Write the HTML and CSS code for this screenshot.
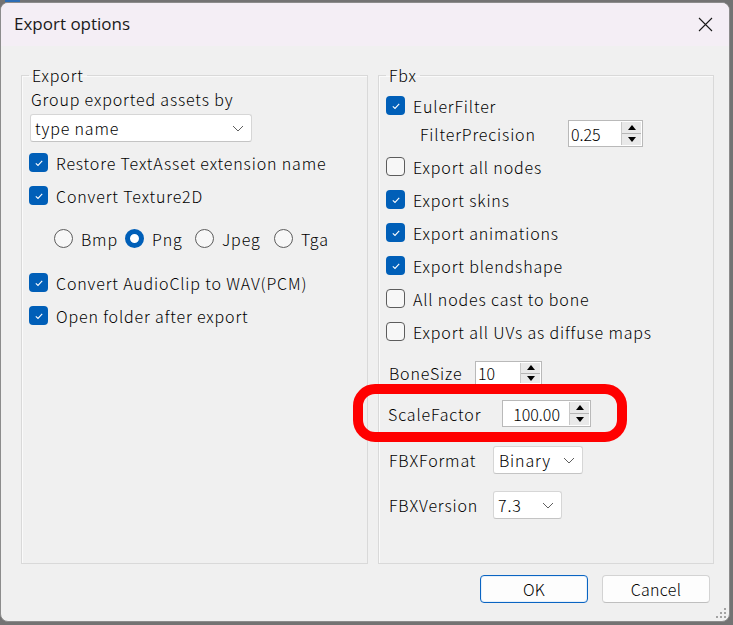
FILE: index.html
```html
<!DOCTYPE html>
<html>

<head>
    <title>Export options</title>
    <link rel="stylesheet" href="styles.css">
</head>

<body>
    <div class="desktop-strip"><span class="desktop-tile"></span></div>

    <div class="window">
        <div class="titlebar">
            <span class="title">Export options</span>
            <svg class="close" width="15" height="15" viewBox="0 0 15 15">
                <path d="M1 1 L14 14 M14 1 L1 14" stroke="#1a1a1a" stroke-width="1.1" fill="none" />
            </svg>
        </div>

        <div class="client">
            <div class="groups">
                <fieldset class="group group-export">
                    <legend>Export</legend>
                    <div class="caption">Group exported assets by</div>
                    <div class="combo combo-group">
                        <span>type name</span>
                        <svg class="chevron" width="12" height="7" viewBox="0 0 12 7"><path d="M1 1 L6 6 L11 1" /></svg>
                    </div>

                    <div class="check first-check"><span class="box on"><svg viewBox="0 0 12 12"><path d="M2.8 6.3 L5 8.4 L9.2 3.8" /></svg></span>Restore TextAsset extension name</div>
                    <div class="check"><span class="box on"><svg viewBox="0 0 12 12"><path d="M2.8 6.3 L5 8.4 L9.2 3.8" /></svg></span>Convert Texture2D</div>

                    <div class="radios">
                        <div class="radio"><span class="dot"></span>Bmp</div>
                        <div class="radio"><span class="dot on"></span>Png</div>
                        <div class="radio"><span class="dot"></span>Jpeg</div>
                        <div class="radio"><span class="dot"></span>Tga</div>
                    </div>

                    <div class="check"><span class="box on"><svg viewBox="0 0 12 12"><path d="M2.8 6.3 L5 8.4 L9.2 3.8" /></svg></span>Convert AudioClip to WAV(PCM)</div>
                    <div class="check"><span class="box on"><svg viewBox="0 0 12 12"><path d="M2.8 6.3 L5 8.4 L9.2 3.8" /></svg></span>Open folder after export</div>
                </fieldset>

                <fieldset class="group group-fbx">
                    <legend>Fbx</legend>
                    <div class="check first-check"><span class="box on"><svg viewBox="0 0 12 12"><path d="M2.8 6.3 L5 8.4 L9.2 3.8" /></svg></span>EulerFilter</div>

                    <div class="field precision-row">
                        <span class="field-label precision-label">FilterPrecision</span>
                        <div class="spin spin-precision">
                            <span class="spin-value">0.25</span>
                            <span class="spin-buttons"><span class="up"></span><span class="down"></span></span>
                        </div>
                    </div>

                    <div class="check after-spin"><span class="box"></span>Export all nodes</div>
                    <div class="check"><span class="box on"><svg viewBox="0 0 12 12"><path d="M2.8 6.3 L5 8.4 L9.2 3.8" /></svg></span>Export skins</div>
                    <div class="check"><span class="box on"><svg viewBox="0 0 12 12"><path d="M2.8 6.3 L5 8.4 L9.2 3.8" /></svg></span>Export animations</div>
                    <div class="check"><span class="box on"><svg viewBox="0 0 12 12"><path d="M2.8 6.3 L5 8.4 L9.2 3.8" /></svg></span>Export blendshape</div>
                    <div class="check"><span class="box"></span>All nodes cast to bone</div>
                    <div class="check"><span class="box"></span>Export all UVs as diffuse maps</div>

                    <div class="field bone-row">
                        <span class="field-label bone-label">BoneSize</span>
                        <div class="spin spin-bone">
                            <span class="spin-value">10</span>
                            <span class="spin-buttons"><span class="up"></span><span class="down"></span></span>
                        </div>
                    </div>

                    <div class="field scale-row">
                        <span class="field-label scale-label">ScaleFactor</span>
                        <div class="spin spin-scale">
                            <span class="spin-value right">100.00</span>
                            <span class="spin-buttons"><span class="up"></span><span class="down"></span></span>
                        </div>
                        <span class="highlight"></span>
                    </div>

                    <div class="field format-row">
                        <span class="field-label fbx-label">FBXFormat</span>
                        <div class="combo combo-format">
                            <span>Binary</span>
                            <svg class="chevron" width="12" height="7" viewBox="0 0 12 7"><path d="M1 1 L6 6 L11 1" /></svg>
                        </div>
                    </div>

                    <div class="field version-row">
                        <span class="field-label fbx-label">FBXVersion</span>
                        <div class="combo combo-version">
                            <span>7.3</span>
                            <svg class="chevron" width="12" height="7" viewBox="0 0 12 7"><path d="M1 1 L6 6 L11 1" /></svg>
                        </div>
                    </div>
                </fieldset>
            </div>

            <div class="buttons">
                <button class="btn btn-ok">OK</button>
                <button class="btn">Cancel</button>
            </div>
        </div>

        <svg class="grip" width="11" height="11" viewBox="0 0 11 11">
            <rect x="8" y="0" width="2" height="2" />
            <rect x="4" y="4" width="2" height="2" />
            <rect x="8" y="4" width="2" height="2" />
            <rect x="0" y="8" width="2" height="2" />
            <rect x="4" y="8" width="2" height="2" />
            <rect x="8" y="8" width="2" height="2" />
        </svg>
    </div>
</body>

</html>
```

FILE: styles.css
```css
body {
    margin: 0;
    background-color: #737373;
    font-family: "Noto Sans CJK JP", "Noto Sans", sans-serif;
    font-size: 16px;
    font-weight: 300;
    letter-spacing: 0.85px;
    color: #000;
}

.desktop-strip {
    height: 2px;
    display: flex;
}

.desktop-tile {
    width: 15px;
    margin-left: 5px;
    background-color: #2c6db5;
}

.window {
    position: relative;
    width: 730px;
    height: 620px;
    box-sizing: border-box;
    border: 1px solid #8c8c8c;
    border-radius: 8px;
    background-color: #f0f0f0;
    display: flex;
    flex-direction: column;
    overflow: hidden;
}

.titlebar {
    height: 43px;
    flex-shrink: 0;
    background-color: #f4eef5;
    display: flex;
    align-items: center;
    justify-content: space-between;
    padding: 0 16px 0 13px;
}

.title {
    margin-top: -2px;
    font-family: "Open Sans", sans-serif;
    font-size: 17px;
    font-weight: 400;
    letter-spacing: 0;
    color: #1a1a1a;
}

.client {
    flex: 1;
    display: flex;
    flex-direction: column;
    padding: 19px 15px 18px 20px;
}

.groups {
    flex: 1;
    display: flex;
    gap: 10px;
}

.group {
    margin: 0;
    padding: 0 7px;
    min-width: 0;
    border: 1px solid #d9d9d9;
    box-shadow: inset 1px 1px 0 #fafafa;
}

.group legend {
    padding: 0 3px;
    line-height: 20px;
}

.group-export {
    width: 347px;
    box-sizing: border-box;
}

.group-fbx {
    width: 336px;
    box-sizing: border-box;
}

.caption {
    margin-top: 4px;
    padding-left: 2px;
    line-height: 20px;
}

/* combo boxes */
.combo {
    display: flex;
    align-items: center;
    justify-content: space-between;
    height: 28px;
    box-sizing: border-box;
    padding: 0 7px 0 4px;
    background-color: #fff;
    border: 1px solid #d6d6d6;
    border-bottom-color: #c4c4c4;
    border-radius: 3px;
}

.combo-group {
    width: 222px;
    margin: 5px 0 0 1px;
}

.combo-format {
    width: 90px;
    padding-left: 5px;
}

.combo-version {
    width: 69px;
}

.chevron path {
    fill: none;
    stroke: #5f5f5f;
    stroke-width: 1;
}

/* check boxes */
.check {
    height: 33px;
    display: flex;
    align-items: center;
    gap: 8px;
}

.first-check {
    margin-top: 4px;
}

.after-spin {
    margin-top: 3px;
}

.box {
    width: 19px;
    height: 19px;
    flex-shrink: 0;
    box-sizing: border-box;
    border: 1px solid #5c5c5c;
    border-radius: 4px;
    background-color: #f7f7f7;
    display: flex;
    align-items: center;
    justify-content: center;
}

.box.on {
    border: none;
    background-color: #005fb8;
}

.box svg {
    width: 12px;
    height: 12px;
}

.box svg path {
    fill: none;
    stroke: #fff;
    stroke-width: 1.1;
}

/* radio buttons */
.radios {
    height: 33px;
    margin: 10px 0 11px 25px;
    display: flex;
    align-items: center;
}

.radio {
    width: 71px;
    display: flex;
    align-items: center;
    gap: 8px;
}

.radio:nth-child(2) {
    width: 70px;
}

.radio:nth-child(3) {
    width: 79px;
}

.dot {
    width: 19px;
    height: 19px;
    box-sizing: border-box;
    border: 1px solid #5c5c5c;
    border-radius: 50%;
    background-color: #f7f7f7;
}

.dot.on {
    border: 5px solid #005fb8;
    background-color: #fff;
}

/* labelled fields on the Fbx side */
.field {
    position: relative;
    display: flex;
    align-items: center;
}

.field-label {
    box-sizing: border-box;
    padding-left: 3px;
}

.precision-row {
    margin-top: -2px;
    height: 27px;
}

.precision-label {
    width: 182px;
    padding-left: 34px;
}

.bone-row {
    margin-top: 13px;
    height: 24px;
}

.bone-label {
    width: 89px;
}

.scale-row {
    margin-top: 15px;
    height: 27px;
}

.scale-label {
    width: 116px;
    padding-left: 2px;
}

.format-row {
    margin-top: 19px;
    height: 28px;
}

.version-row {
    margin-top: 17px;
    height: 28px;
}

.fbx-label {
    width: 107px;
}

/* numeric up/down */
.spin {
    height: 100%;
    box-sizing: border-box;
    display: flex;
    background-color: #fff;
    border: 1px solid #b9b9b9;
    letter-spacing: 0;
}

.spin-precision {
    width: 75px;
}

.spin-bone {
    width: 67px;
}

.spin-scale {
    width: 89px;
}

.spin-value {
    flex: 1;
    display: flex;
    align-items: center;
    padding-left: 2px;
}

.spin-value.right {
    justify-content: flex-end;
    padding-right: 9px;
}

.spin-buttons {
    width: 19px;
    margin: 1px 1px 1px 0;
    display: flex;
    flex-direction: column;
    border-left: 1px solid #c8c8c8;
    background-color: #e9e9e9;
}

.spin-buttons .up,
.spin-buttons .down {
    flex: 1;
    display: flex;
    align-items: center;
    justify-content: center;
}

.spin-buttons .up {
    border-bottom: 1px solid #b5b5b5;
}

.spin-buttons .up::after {
    content: "";
    border-left: 4px solid transparent;
    border-right: 4px solid transparent;
    border-bottom: 5px solid #000;
}

.spin-buttons .down::after {
    content: "";
    border-left: 4px solid transparent;
    border-right: 4px solid transparent;
    border-top: 5px solid #000;
}

/* red marker round the scale factor */
.highlight {
    position: absolute;
    left: -33px;
    top: -16px;
    width: 274px;
    height: 58px;
    box-sizing: border-box;
    border: 10px solid #ff0000;
    border-radius: 22px;
}

/* dialog buttons */
.buttons {
    margin-top: 11px;
    margin-right: 4px;
    display: flex;
    justify-content: flex-end;
    gap: 14px;
}

.btn {
    height: 28px;
    width: 108px;
    font-family: inherit;
    font-size: 16px;
    font-weight: 300;
    letter-spacing: 0.3px;
    color: #000;
    background-color: #fdfdfd;
    border: 1px solid #d3d3d3;
    border-bottom-color: #bfbfbf;
    border-radius: 4px;
    padding: 0;
}

.btn-ok {
    border: 1px solid #0a64c2;
    box-shadow: inset 0 0 0 1px #e6f0fa;
}

.grip {
    position: absolute;
    right: 2px;
    bottom: 2px;
    fill: #a3a3a3;
}
```
